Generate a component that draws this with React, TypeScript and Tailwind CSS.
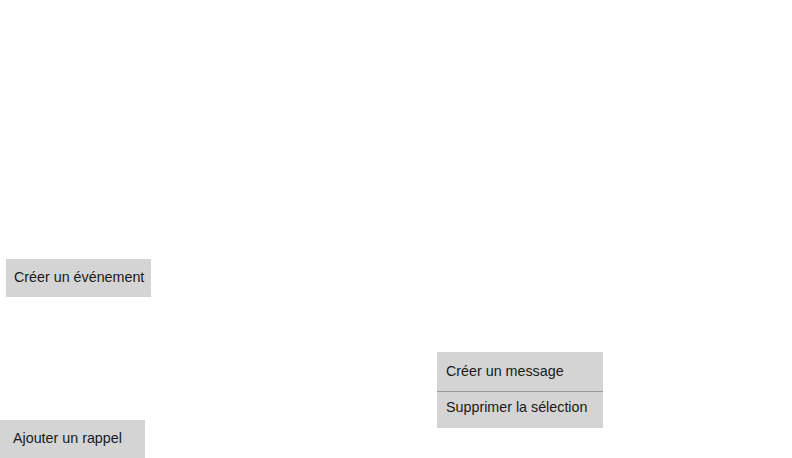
export default function App() {
  const font = { fontFamily: '"Liberation Sans", Arial, sans-serif' };
  return (
    <div className="relative h-[458px] w-[792px] overflow-hidden bg-white text-[14.3px] text-[#1a1a1a]" style={font}>
      <div className="absolute left-[6px] top-[259px] w-[145px] bg-[#d4d4d4]">
        <div className="flex h-[38px] items-start pl-[8px] pt-[8px]">Créer un événement</div>
      </div>

      <div className="absolute left-[437px] top-[352px] w-[166px] bg-[#d4d4d4]">
        <div className="flex h-[39px] items-start pl-[9px] pt-[9px]">Créer un message</div>
        <div className="h-px bg-[#9a9a9a]" />
        <div className="flex h-[36px] items-start pl-[9px] pt-[5px]">Supprimer la sélection</div>
      </div>

      <div className="absolute left-0 top-[420px] w-[145px] bg-[#d4d4d4]">
        <div className="flex h-[38px] items-start pl-[13px] pt-[8px]">Ajouter un rappel</div>
      </div>
    </div>
  );
}
